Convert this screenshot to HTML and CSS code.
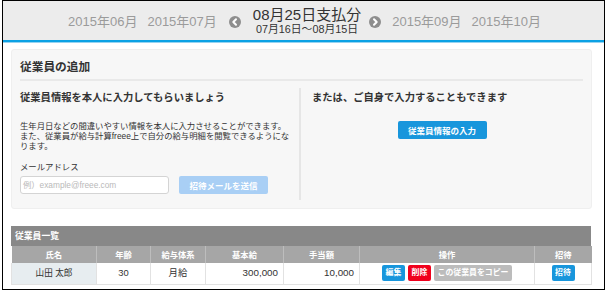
FILE: index.html
```html
<!DOCTYPE html>
<html lang="ja">
<head>
<meta charset="utf-8">
<link rel="stylesheet" href="styles.css">
</head>
<body>
<div class="frame">
  <header class="period">
    <span class="month">2015年06月</span>
    <span class="month">2015年07月</span>
    <span class="arrow arrow-left"><svg viewBox="0 0 12 12" width="12" height="12"><circle cx="6" cy="6" r="6" fill="#8e8e8e"/><polyline points="7,3.2 4.3,6 7,8.8" fill="none" stroke="#fff" stroke-width="2" stroke-linecap="round" stroke-linejoin="round"/></svg></span>
    <div class="current">
      <div class="pay">08月25日支払分</div>
      <div class="range">07月16日〜08月15日</div>
    </div>
    <span class="arrow arrow-right"><svg viewBox="0 0 12 12" width="12" height="12"><circle cx="6" cy="6" r="6" fill="#8e8e8e"/><polyline points="5,3.2 7.7,6 5,8.8" fill="none" stroke="#fff" stroke-width="2" stroke-linecap="round" stroke-linejoin="round"/></svg></span>
    <span class="month">2015年09月</span>
    <span class="month">2015年10月</span>
  </header>
  <div class="accent"></div>
  <main class="content">
    <section class="card">
      <h2 class="card-title">従業員の追加</h2>
      <div class="cols">
        <div class="col col-left">
          <h3 class="sub">従業員情報を本人に入力してもらいましょう</h3>
          <p class="desc">生年月日などの間違いやすい情報を本人に入力させることができます。<br>また、従業員が給与計算freee上で自分の給与明細を閲覧できるようになります。</p>
          <div class="label">メールアドレス</div>
          <div class="invite-row">
            <div class="input">例）example@freee.com</div>
            <span class="btn btn-disabled">招待メールを送信</span>
          </div>
        </div>
        <div class="col col-right">
          <h3 class="sub">または、ご自身で入力することもできます</h3>
          <div class="self-action"><span class="btn btn-blue btn-lg">従業員情報の入力</span></div>
        </div>
      </div>
    </section>
    <section class="list">
      <div class="list-title">従業員一覧</div>
      <table class="table">
        <thead>
          <tr>
            <th class="c-name">氏名</th>
            <th class="c-age">年齢</th>
            <th class="c-type">給与体系</th>
            <th class="c-base">基本給</th>
            <th class="c-allow">手当額</th>
            <th class="c-ops">操作</th>
            <th class="c-inv">招待</th>
          </tr>
        </thead>
        <tbody>
          <tr>
            <td class="name">山田 太郎</td>
            <td class="mid">30</td>
            <td class="mid">月給</td>
            <td class="num">300,000</td>
            <td class="num">10,000</td>
            <td class="ops"><span class="btn btn-sm btn-blue">編集</span><span class="btn btn-sm btn-red">削除</span><span class="btn btn-sm btn-gray">この従業員をコピー</span></td>
            <td class="mid"><span class="btn btn-sm btn-blue">招待</span></td>
          </tr>
        </tbody>
      </table>
    </section>
  </main>
</div>
</body>
</html>
```

FILE: styles.css
```css
* { box-sizing: border-box; margin: 0; padding: 0; }
html, body { background: #fff; }
body {
  font-family: "Liberation Sans", "Noto Sans CJK JP", sans-serif;
  color: #333;
}
.frame {
  margin-left: 2px;
  width: 603px;
  height: 290px;
  border: 1px solid #000;
  overflow: hidden;
  background: #fff;
}
.period {
  height: 39px;
  background: #ececec;
  display: flex;
  align-items: center;
  justify-content: center;
  padding-left: 2px;
}
.month {
  font-size: 13px;
  line-height: 15px;
  color: #9b9b9b;
  margin: 1px 5px 0;
}
.arrow {
  display: flex;
  width: 12px;
  height: 12px;
  margin-top: 3px;
}
.arrow-left { margin-left: 7px; margin-right: 12px; }
.arrow-right { margin-left: 8px; margin-right: 6px; }
.current { text-align: center; }
.pay { font-size: 15px; line-height: 16px; color: #333; }
.range { font-size: 10.8px; line-height: 12px; color: #333; }
.accent {
  height: 3px;
  border-top: 2px solid #0ba1e4;
  background: #96d3f1;
}
.content { padding: 6px 12px 0 8px; }
.card {
  height: 160px;
  background: #f7f7f7;
  border: 1px solid #efefef;
  border-radius: 3px;
  padding: 10px 8px 8px 8px;
}
.card-title {
  font-size: 11.7px;
  line-height: 14px;
  font-weight: bold;
  padding-bottom: 5px;
  border-bottom: 2px solid #e9e9e9;
}
.cols {
  display: flex;
  margin-top: 7px;
  height: 112px;
}
.col-left {
  width: 281px;
  border-right: 2px solid #e6e6e6;
  padding-right: 6px;
}
.col-right {
  flex: 1;
  padding-left: 11px;
}
.sub {
  font-size: 10.3px;
  line-height: 14px;
  font-weight: bold;
  margin-top: 3px;
}
.desc {
  margin-top: 16px;
  font-size: 8.35px;
  line-height: 10px;
}
.label {
  margin-top: 11px;
  font-size: 8.4px;
  line-height: 10px;
}
.invite-row {
  display: flex;
  align-items: center;
  margin-top: 4px;
  gap: 10px;
}
.input {
  width: 149px;
  height: 18px;
  background: #fff;
  border: 1px solid #d4d4d4;
  border-radius: 3px;
  font-size: 8.3px;
  line-height: 16px;
  color: #b9b9b9;
  padding-left: 2px;
}
.btn {
  display: inline-flex;
  align-items: center;
  justify-content: center;
  color: #fff;
  font-weight: bold;
  border-radius: 2px;
  white-space: nowrap;
}
.btn-disabled {
  width: 89px;
  height: 18px;
  background: #a9cff5;
  font-size: 8.5px;
}
.self-action {
  display: flex;
  justify-content: center;
  margin-top: 16px;
  padding-right: 11px;
}
.btn-lg {
  width: 89px;
  height: 18px;
  font-size: 8.5px;
}
.btn-blue { background: #1896dc; }
.btn-red { background: #f0001c; }
.btn-gray { background: #bcbcbc; }
.list { margin-top: 17px; width: 580px; }
.list-title {
  height: 20px;
  background: #888;
  color: #fff;
  font-weight: bold;
  font-size: 8.8px;
  line-height: 20px;
  padding-left: 4px;
}
.table {
  width: 580px;
  border-collapse: collapse;
  table-layout: fixed;
}
.table th {
  height: 17px;
  background: #a6a6a6;
  color: #fff;
  font-weight: bold;
  font-size: 8.3px;
  line-height: 12px;
  text-align: center;
  border-left: 1px solid #bdbdbd;
  padding: 0;
}
.table th:first-child { border-left: none; }
.c-name { width: 85px; }
.c-age { width: 54px; }
.c-type { width: 55px; }
.c-base { width: 78px; }
.c-allow { width: 76px; }
.c-ops { width: 175px; }
.c-inv { width: 57px; }
.table td {
  height: 21px;
  border: 1px solid #e2e2e2;
  border-top: none;
  font-size: 9.8px;
  line-height: 12px;
  padding: 0 5px;
  background: #fff;
}
.table td.name {
  background: #e7edf0;
  text-align: center;
  font-size: 8.6px;
}
.table td.mid { font-size: 9.4px; }
.mid { text-align: center; }
.num { text-align: right; }
.ops { text-align: center; }
.btn-sm {
  height: 16px;
  font-size: 7.9px;
  padding: 0 4px;
  vertical-align: middle;
  margin: 0 1.5px;
}
.ops .btn-sm:first-child,
.ops .btn-sm:nth-child(2) { width: 23px; padding: 0; }
.ops .btn-gray { width: 78px; padding: 0; }
.mid .btn-sm { width: 23px; padding: 0; }
```
